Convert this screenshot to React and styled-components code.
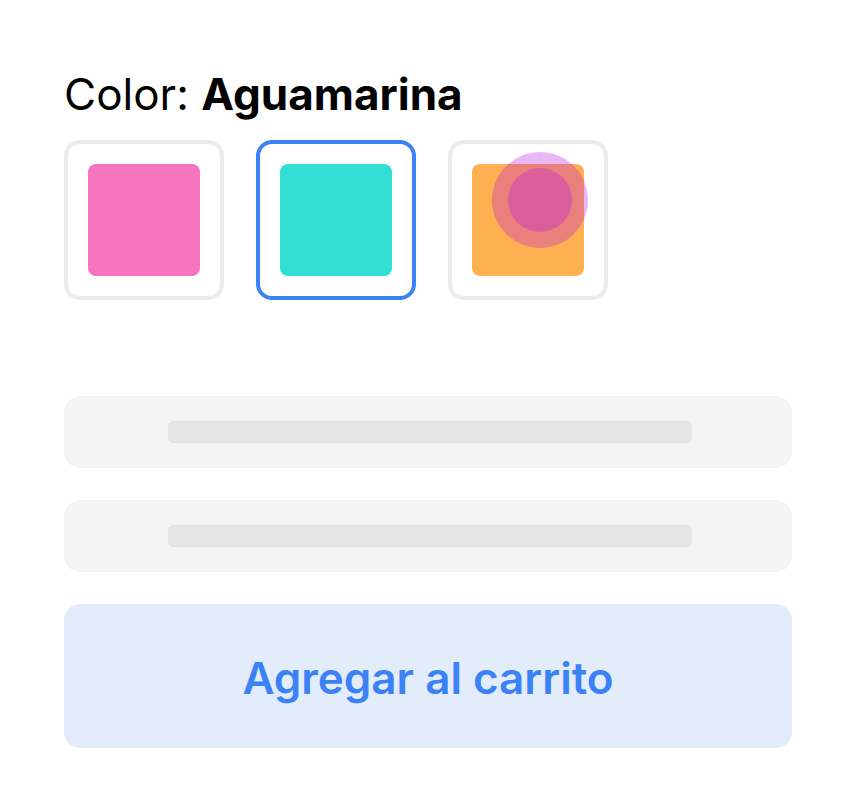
import React from "react";
import styled, { createGlobalStyle } from "styled-components";

const GlobalStyle = createGlobalStyle`
  html, body {
    margin: 0;
    padding: 0;
    background: #ffffff;
    font-family: Inter, "Noto Sans", sans-serif;
  }
`;

const Page = styled.div`
  width: 856px;
  height: 812px;
  box-sizing: border-box;
  padding: 64px 64px 0 64px;
  display: flex;
  flex-direction: column;
`;

const Title = styled.h2`
  margin: 0;
  font-size: 44px;
  line-height: 60px;
  font-weight: 400;
  color: #000;
  height: 60px;
  margin-bottom: 16px;
  letter-spacing: 0;

  & b {
    font-weight: 700;
  }
`;

const SwatchRow = styled.div`
  display: flex;
  gap: 32px;
`;

const Swatch = styled.div`
  position: relative;
  width: 160px;
  height: 160px;
  box-sizing: border-box;
  border: 4px solid ${(p) => (p.$active ? "#3b82f6" : "#ececec")};
  border-radius: 16px;
  padding: 20px;
  background: #fff;
`;

const Chip = styled.div`
  width: 112px;
  height: 112px;
  border-radius: 8px;
  background: ${(p) => p.$color};
`;

const Touch = styled.div`
  position: absolute;
  left: 40px;
  top: 8px;
  width: 96px;
  height: 96px;
  border-radius: 50%;
  background: rgba(182, 18, 222, 0.3);
  display: flex;
  align-items: center;
  justify-content: center;

  &::after {
    content: "";
    width: 64px;
    height: 64px;
    border-radius: 50%;
    background: rgba(182, 18, 222, 0.3);
  }
`;

const Fields = styled.div`
  margin-top: 96px;
  display: flex;
  flex-direction: column;
  gap: 32px;
`;

const Field = styled.div`
  height: 72px;
  border-radius: 16px;
  background: #f4f4f4;
  display: flex;
  align-items: center;
  padding-left: 104px;
`;

const Placeholder = styled.div`
  width: 524px;
  height: 22px;
  border-radius: 6px;
  background: #e4e4e4;
`;

const CartButton = styled.button`
  height: 144px;
  border: none;
  border-radius: 16px;
  background: #e2ecfb;
  color: #3b82f6;
  font-family: Inter, "Noto Sans", sans-serif;
  font-size: 44px;
  font-weight: 600;
  padding-top: 4px;
  cursor: pointer;
`;

const colors = [
  { name: "Rosa", value: "#f674c0" },
  { name: "Aguamarina", value: "#33dfd3" },
  { name: "Naranja", value: "#ffb152" },
];

export default function App() {
  return (
    <>
      <GlobalStyle />
      <Page>
        <Title>
          Color: <b>Aguamarina</b>
        </Title>
        <SwatchRow>
          {colors.map((c, i) => (
            <Swatch key={c.name} $active={i === 1}>
              <Chip $color={c.value} />
              {i === 2 && <Touch />}
            </Swatch>
          ))}
        </SwatchRow>
        <Fields>
          <Field>
            <Placeholder />
          </Field>
          <Field>
            <Placeholder />
          </Field>
          <CartButton>Agregar al carrito</CartButton>
        </Fields>
      </Page>
    </>
  );
}
